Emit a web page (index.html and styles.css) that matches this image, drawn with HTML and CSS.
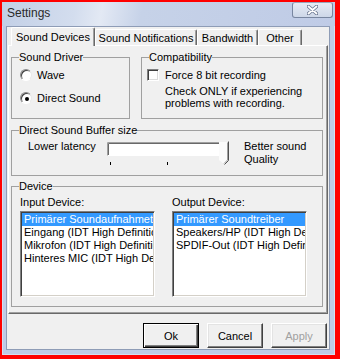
FILE: index.html
```html
<!DOCTYPE html>
<html lang="en">
<head>
  <meta charset="UTF-8">
  <title>Settings</title>
  <link rel="stylesheet" href="styles.css">
</head>
<body>
  <div class="window">
    <div class="titlebar">
      <span class="title">Settings</span>
      <div class="close">
        <svg width="11" height="10" viewBox="0 0 11 10">
          <path d="M1.5 1.5 L9.5 8.5 M9.5 1.5 L1.5 8.5" stroke="#6a7690" stroke-width="3.6" stroke-linecap="round"/>
          <path d="M1.5 1.5 L9.5 8.5 M9.5 1.5 L1.5 8.5" stroke="#fff" stroke-width="1.8" stroke-linecap="round"/>
        </svg>
      </div>
    </div>

    <div class="client">
      <div class="tabs">
        <div class="tab active tab-devices">Sound Devices</div>
        <div class="tab tab-notify">Sound Notifications</div>
        <div class="tab tab-band">Bandwidth</div>
        <div class="tab tab-other">Other</div>
      </div>

      <div class="panel">
        <div class="top-row">
          <fieldset class="group driver">
            <legend>Sound Driver</legend>
            <div class="driver-body">
              <div class="option"><span class="radio"></span>Wave</div>
              <div class="option second"><span class="radio on"></span>Direct Sound</div>
            </div>
          </fieldset>
          <fieldset class="group compat">
            <legend>Compatibility</legend>
            <div class="compat-body">
              <div class="option"><span class="checkbox"></span>Force 8 bit recording</div>
              <div class="note">Check ONLY if experiencing<br>problems with recording.</div>
            </div>
          </fieldset>
        </div>

        <fieldset class="group buffer">
          <legend>Direct Sound Buffer size</legend>
          <div class="buffer-body">
            <span class="lower">Lower latency</span>
            <svg class="slider" width="124" height="26" viewBox="0 0 124 26">
              <rect x="0" y="1" width="116" height="14" fill="#fff"/>
              <path d="M0.5 15 V1.5 H116" stroke="#a0a0a0" fill="none"/>
              <path d="M1.5 14 V2.5 H116" stroke="#696969" fill="none"/>
              <path d="M0.5 14.5 H116" stroke="#fff" fill="none"/>
              <path d="M112 1 H121 V19 L117 23 L112 19 Z" fill="#fbfbfb"/>
              <path d="M121.5 0.5 V19.5 L117.5 23.5" stroke="#505050" fill="none"/>
              <path d="M120.5 1.5 V19 L117 22.5" stroke="#a0a0a0" fill="none"/>
              <path d="M3.5 21 V24 M60.5 21 V24" stroke="#000" fill="none"/>
            </svg>
            <span class="better">Better sound<br>Quality</span>
          </div>
        </fieldset>

        <fieldset class="group device">
          <legend>Device</legend>
          <div class="device-body">
            <div class="device-col">
              <div class="caption">Input Device:</div>
              <div class="listbox">
                <div class="item selected">Primärer Soundaufnahmetreiber</div>
                <div class="item">Eingang (IDT High Definition Audio CODEC)</div>
                <div class="item">Mikrofon (IDT High Definition Audio CODEC)</div>
                <div class="item">Hinteres MIC (IDT High Definition Audio CODEC)</div>
              </div>
            </div>
            <div class="device-col">
              <div class="caption">Output Device:</div>
              <div class="listbox">
                <div class="item selected">Primärer Soundtreiber</div>
                <div class="item">Speakers/HP (IDT High Definition Audio CODEC)</div>
                <div class="item">SPDIF-Out (IDT High Definition Audio CODEC)</div>
              </div>
            </div>
          </div>
        </fieldset>
      </div>

      <div class="buttons">
        <button class="btn default">Ok</button>
        <button class="btn">Cancel</button>
        <button class="btn" disabled>Apply</button>
      </div>
    </div>
  </div>
</body>
</html>
```

FILE: styles.css
```css
body {
  margin: 0;
  padding: 2px 0 0 2px;
  background: #f00;
  font-family: "Liberation Sans", Arial, sans-serif;
  font-size: 11px;
  color: #000;
}
.window {
  width: 333px;
  height: 353px;
  box-sizing: border-box;
  padding: 0 5px 5px 4px;
  background: #bfcbe6;
  box-shadow: inset 1px 0 #d6deef, inset -1px -1px #d6deef;
}
.titlebar {
  height: 24px;
  display: flex;
  align-items: flex-start;
  background: linear-gradient(100deg, #c2cfe6 0%, #d3ddee 22%, #e3e9f4 30%, #c6d2e8 42%, #bfcbe6 100%);
  margin: 0 -5px 0 -4px;
  padding: 0 2px 0 4px;
}
.title {
  line-height: 23px;
  padding-left: 1px;
  font-size: 12px;
  color: #2a2a2a;
}
.close {
  margin-left: auto;
  width: 41px;
  height: 16px;
  box-sizing: border-box;
  border: 1px solid #7886a0;
  border-top-color: #9aa6bb;
  border-radius: 3px;
  background: linear-gradient(#e6ebf4, #cdd7e8);
  display: flex;
  align-items: center;
  justify-content: center;
}
.client {
  height: 324px;
  box-sizing: border-box;
  border: 1px solid #8e9cb6;
  background: #f0f0f0;
}

/* tabs */
.tabs {
  display: flex;
  align-items: flex-end;
  height: 18px;
  padding-left: 4px;
}
.tab {
  height: 16px;
  box-sizing: border-box;
  border: 1px solid #fff;
  border-bottom: 0;
  border-right-color: #696969;
  box-shadow: inset -1px 0 #a0a0a0;
  border-radius: 2px 2px 0 0;
  padding-top: 1px;
  line-height: 14px;
  text-align: center;
  white-space: nowrap;
}
.tab.active {
  height: 19px;
  margin-bottom: -1px;
  padding-top: 0;
  line-height: 18px;
  position: relative;
  z-index: 1;
  background: #f0f0f0;
}
.tab-devices { width: 84px; }
.tab-notify { width: 102px; }
.tab-band { width: 61px; }
.tab-other { width: 44px; }

.panel {
  margin: 0 1px;
  height: 269px;
  box-sizing: border-box;
  border: 1px solid;
  border-color: #fff #696969 #696969 #fff;
  box-shadow: inset -1px -1px #a0a0a0;
  padding: 5px 4px 0 2px;
}

/* group boxes */
.group {
  margin: 0;
  padding: 0;
  min-width: 0;
  box-sizing: border-box;
  border: 1px solid #a0a0a0;
}
.group legend {
  padding: 0;
  margin-left: 7px;
  line-height: 13px;
}
.top-row {
  display: flex;
  gap: 11px;
}
.driver {
  width: 119px;
  height: 68px;
}
.compat {
  flex: 1;
  height: 68px;
}
.driver-body {
  padding: 5px 0 0 8px;
}
.compat-body {
  padding: 5px 0 0 5px;
}
.option {
  display: flex;
  align-items: center;
  height: 12px;
  line-height: 12px;
  white-space: nowrap;
}
.option.second {
  margin-top: 11px;
}
.radio {
  width: 12px;
  height: 12px;
  box-sizing: border-box;
  margin-right: 5px;
  border-radius: 50%;
  border: 1px solid;
  border-color: #8a8a8a #e8e8e8 #fff #8a8a8a;
  box-shadow: inset 1px 1px #404040;
  background: #fff;
  display: flex;
  align-items: center;
  justify-content: center;
}
.radio.on::after {
  content: "";
  width: 4px;
  height: 4px;
  border-radius: 50%;
  background: #000;
  margin: 1px 0 0 1px;
}
.checkbox {
  width: 12px;
  height: 12px;
  box-sizing: border-box;
  margin-right: 6px;
  border: 1px solid;
  border-color: #808080 #fff #fff #808080;
  box-shadow: inset 1px 1px #404040, inset -1px -1px #dcdcdc;
  background: #fff;
}
.note {
  margin: 4px 0 0 18px;
  line-height: 12px;
}

.buffer {
  margin-top: 5px;
  height: 52px;
}
.buffer-body {
  display: flex;
  align-items: flex-start;
  padding-left: 16px;
}
.lower {
  width: 79px;
  margin-top: 3px;
  line-height: 12px;
}
.slider {
  margin-top: 4px;
}
.better {
  margin: 3px 0 0 13px;
  line-height: 13px;
}

.device {
  margin-top: 4px;
  height: 127px;
}
.device-body {
  display: flex;
  gap: 17px;
  padding-left: 8px;
}
.device-col {
  width: 135px;
}
.caption {
  margin-top: 3px;
  line-height: 12px;
}
.listbox {
  margin-top: 3px;
  height: 86px;
  box-sizing: border-box;
  border: 1px solid;
  border-color: #808080 #fff #fff #808080;
  box-shadow: inset 1px 1px #404040, inset -1px -1px #d4d0c8;
  background: #fff;
  padding: 1px;
  overflow: hidden;
}
.item {
  line-height: 13px;
  padding-left: 2px;
  white-space: nowrap;
  overflow: hidden;
}
.item.selected {
  background: #3399ff;
  color: #fff;
}

/* bottom buttons */
.buttons {
  display: flex;
  justify-content: flex-end;
  gap: 8px;
  padding: 9px 2px 0 0;
}
.btn {
  width: 56px;
  height: 25px;
  box-sizing: border-box;
  padding: 0;
  font: inherit;
  color: #000;
  background: #f0f0f0;
  border: 1px solid;
  border-color: #fff #404040 #404040 #fff;
  box-shadow: inset -1px -1px #808080, inset 1px 1px #e3e3e3;
}
.btn.default {
  border: 1px solid #000;
  box-shadow: inset 1px 1px #fff, inset -1px -1px #404040, inset -2px -2px #808080;
}
.btn:disabled {
  color: #a0a0a0;
}
```
